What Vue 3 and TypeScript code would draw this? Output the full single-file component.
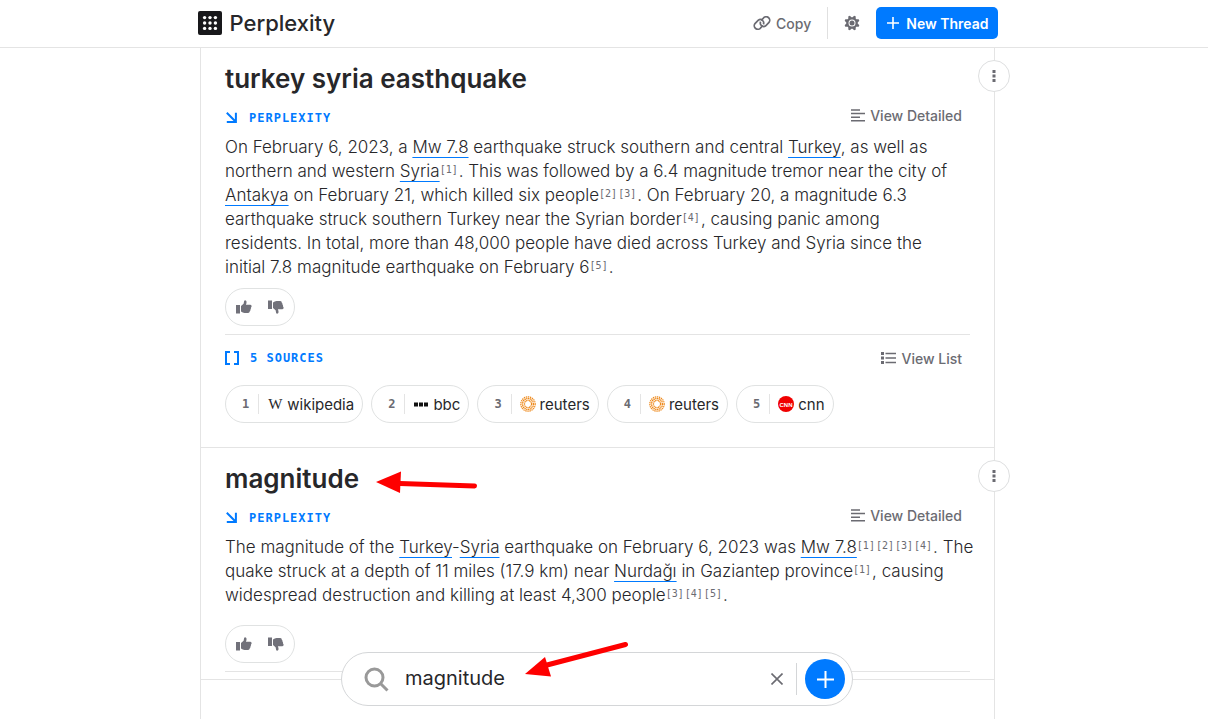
<script setup lang="ts">
import { ref } from 'vue'

type Token = { kind: 'text' | 'link' | 'cite'; value: string }
type Source = { id: number; name: string; icon: 'wikipedia' | 'bbc' | 'reuters' | 'cnn' }
type Thread = { title: string; lines: Token[][]; sources: Source[]; marked?: boolean }

const t = (value: string): Token => ({ kind: 'text', value })
const a = (value: string): Token => ({ kind: 'link', value })
const c = (value: number): Token => ({ kind: 'cite', value: `[${value}]` })

const threads: Thread[] = [
  {
    title: 'turkey syria easthquake',
    lines: [
      [t('On February 6, 2023, a '), a('Mw 7.8'), t(' earthquake struck southern and central '), a('Turkey'), t(', as well as')],
      [t('northern and western '), a('Syria'), c(1), t('. This was followed by a 6.4 magnitude tremor near the city of')],
      [a('Antakya'), t(' on February 21, which killed six people'), c(2), c(3), t('. On February 20, a magnitude 6.3')],
      [t('earthquake struck southern Turkey near the Syrian border'), c(4), t(', causing panic among')],
      [t('residents. In total, more than 48,000 people have died across Turkey and Syria since the')],
      [t('initial 7.8 magnitude earthquake on February 6'), c(5), t('.')],
    ],
    sources: [
      { id: 1, name: 'wikipedia', icon: 'wikipedia' },
      { id: 2, name: 'bbc', icon: 'bbc' },
      { id: 3, name: 'reuters', icon: 'reuters' },
      { id: 4, name: 'reuters', icon: 'reuters' },
      { id: 5, name: 'cnn', icon: 'cnn' },
    ],
  },
  {
    title: 'magnitude',
    marked: true,
    lines: [
      [t('The magnitude of the '), a('Turkey'), t('-'), a('Syria'), t(' earthquake on February 6, 2023 was '), a('Mw 7.8'), c(1), c(2), c(3), c(4), t('. The')],
      [t('quake struck at a depth of 11 miles (17.9 km) near '), a('Nurdağı'), t(' in Gaziantep province'), c(1), t(', causing')],
      [t('widespread destruction and killing at least 4,300 people'), c(3), c(4), c(5), t('.')],
    ],
    sources: [],
  },
]

const query = ref('magnitude')
const teeth = [0, 45, 90, 135, 180, 225, 270, 315]
const grid = [0, 1, 2, 3, 4, 5, 6, 7, 8]
const rings = [
  { r: 7.2, w: 1.2, dash: '1.4 0.7' },
  { r: 5.5, w: 1.4, dash: '1.3 0.5' },
  { r: 3.6, w: 1.3, dash: '1.2 0.4' },
]
</script>

<template>
  <div class="page">
    <header class="topbar">
      <div class="topbar-inner">
        <a class="brand" href="#">
          <svg width="24" height="24" viewBox="0 0 24 24" aria-hidden="true">
            <rect width="24" height="24" rx="2" fill="#18181b" />
            <circle v-for="n in grid" :key="n" :cx="6.6 + (n % 3) * 5.4" :cy="6.6 + Math.floor(n / 3) * 5.4" r="1.7" fill="#fff" />
          </svg>
          <span>Perplexity</span>
        </a>
        <nav class="actions">
          <button type="button" class="quiet copy">
            <svg width="18" height="14" viewBox="0 0 18 14" fill="none" stroke="currentColor" stroke-width="1.7" aria-hidden="true">
              <path d="M9.9 9.6 7.6 11.9 A3.4 3.4 0 0 1 2 7.6 L5.3 4.2 A3.4 3.4 0 0 1 10.4 8.3" />
              <path d="M8.1 4.4 10.4 2.1 A3.4 3.4 0 0 1 16 6.4 L12.7 9.8 A3.4 3.4 0 0 1 7.6 5.7" />
            </svg>
            Copy
          </button>
          <button type="button" class="quiet gear" aria-label="Settings">
            <svg width="16" height="16" viewBox="-8 -8 16 16" aria-hidden="true">
              <path v-for="d in teeth" :key="d" d="M-2.2 -4.5 L-0.8 -7.6 H0.8 L2.2 -4.5 Z" fill="currentColor" :transform="`rotate(${d + 22.5})`" />
              <circle r="4.5" fill="none" stroke="currentColor" stroke-width="2" />
              <circle r="2.5" fill="currentColor" />
            </svg>
          </button>
          <button type="button" class="new-thread">
            <svg width="12" height="12" viewBox="0 0 12 12" stroke="currentColor" stroke-width="1.6" aria-hidden="true">
              <path d="M6 0V12M0 6H12" />
            </svg>
            New Thread
          </button>
        </nav>
      </div>
    </header>

    <main class="column">
      <section v-for="thread in threads" :key="thread.title" class="thread">
        <h2>{{ thread.title }}</h2>
        <button type="button" class="more" aria-label="More options">
          <svg width="4" height="12" viewBox="0 0 4 12" fill="currentColor" aria-hidden="true">
            <path d="M.5 0h3v3h-3zM.5 4.5h3v3h-3zM.5 9h3v3h-3z" />
          </svg>
        </button>
        <svg v-if="thread.marked" class="mark title-mark" width="104" height="26" viewBox="0 0 104 26" aria-hidden="true">
          <path d="M24 13.500 L98.500 16" stroke="#fe0000" stroke-width="5" stroke-linecap="round" />
          <path d="M0 12 L25 1.500 L24 23 Z" fill="#fe0000" />
        </svg>

        <div class="row answer-row">
          <span class="label">
            <svg width="11" height="11" viewBox="0 0 11 11" fill="none" stroke="currentColor" stroke-width="2" aria-hidden="true">
              <path d="M.8 .8 9 9M9.900 .8V9.900H.8" />
            </svg>
            PERPLEXITY
          </span>
          <button type="button" class="quiet">
            <svg width="14" height="13" viewBox="0 0 14 13" stroke="currentColor" stroke-width="1.5" aria-hidden="true">
              <path d="M0 1H9M0 4.600H14M0 8.200H9M0 11.800H14" />
            </svg>
            View Detailed
          </button>
        </div>

        <p class="answer">
          <span v-for="(line, i) in thread.lines" :key="i" class="line">
            <template v-for="(token, j) in line" :key="j"><a v-if="token.kind === 'link'" href="#">{{ token.value }}</a><sup v-else-if="token.kind === 'cite'">{{ token.value }}</sup><template v-else>{{ token.value }}</template></template>
          </span>
        </p>

        <div class="feedback">
          <button type="button" aria-label="Helpful">
            <svg width="16" height="14" viewBox="0 0 16 14" fill="currentColor" aria-hidden="true">
              <path d="M0 5h4v8.500H0zM5 6 7.600 3.800 8.200.8Q9.200-.2 10.300 1q.6 1.400-.4 3.800h4.500q1.300.3 1.200 1.400 0 .8-.7 1.200.5 1-.4 1.900.3 1.100-.6 1.800 0 1.700-1.700 1.800H8.500Q6.800 12.800 5 11.400z" />
            </svg>
          </button>
          <button type="button" aria-label="Not helpful">
            <svg width="16" height="14" viewBox="0 0 16 14" fill="currentColor" aria-hidden="true">
              <path transform="translate(0 14) scale(1 -1)" d="M0 5h4v8.500H0zM5 6 7.600 3.800 8.200.8Q9.200-.2 10.300 1q.6 1.400-.4 3.800h4.500q1.300.3 1.200 1.400 0 .8-.7 1.200.5 1-.4 1.900.3 1.100-.6 1.800 0 1.700-1.700 1.800H8.500Q6.800 12.800 5 11.400z" />
            </svg>
          </button>
        </div>

        <hr />

        <template v-if="thread.sources.length">
          <div class="row sources-row">
            <span class="label">
              <svg width="14" height="14" viewBox="0 0 14 14" fill="none" stroke="currentColor" stroke-width="2" aria-hidden="true">
                <path d="M5 1H1V13H5M9 1H13V13H9" />
              </svg>
              {{ thread.sources.length }} SOURCES
            </span>
            <button type="button" class="quiet">
              <svg width="15" height="12" viewBox="0 0 15 12" stroke="currentColor" aria-hidden="true">
                <path d="M0 1.500H3M0 6H3M0 10.500H3" stroke-width="2.800" />
                <path d="M4.500 1.500H15M4.500 6H15M4.500 10.500H15" stroke-width="1.400" />
              </svg>
              View List
            </button>
          </div>
          <div class="chips">
            <a v-for="source in thread.sources" :key="source.id" class="chip" href="#">
              <span class="num">{{ source.id }}</span>
              <span v-if="source.icon === 'wikipedia'" class="wiki" aria-hidden="true">W</span>
              <svg v-else-if="source.icon === 'bbc'" width="16" height="16" viewBox="0 0 16 16" aria-hidden="true">
                <path d="M1 6.500h4v4H1zM6 6.500h4v4H6zM11 6.500h4v4H11z" fill="#111" />
              </svg>
              <svg v-else-if="source.icon === 'reuters'" width="16" height="16" viewBox="-8 -8 16 16" aria-hidden="true">
                <circle v-for="ring in rings" :key="ring.r" :r="ring.r" fill="none" stroke="#ee8a1d" :stroke-width="ring.w" :stroke-dasharray="ring.dash" />
              </svg>
              <svg v-else width="16" height="16" viewBox="0 0 16 16" aria-hidden="true">
                <circle cx="8" cy="8" r="8" fill="#f00000" />
                <text x="8" y="10.500" class="cnn">CNN</text>
              </svg>
              <span>{{ source.name }}</span>
            </a>
          </div>
        </template>
      </section>
    </main>

    <div class="dock">
      <form class="search" @submit.prevent>
        <svg width="25" height="25" viewBox="0 0 25 25" fill="none" stroke="#999" stroke-width="3" aria-hidden="true">
          <circle cx="10.500" cy="10.500" r="8.500" />
          <path d="M16.500 16.500 23.500 23.500" />
        </svg>
        <input v-model="query" type="text" aria-label="Ask a follow-up" />
        <button type="button" class="clear" aria-label="Clear" @click="query = ''">
          <svg width="12" height="12" viewBox="0 0 12 12" stroke="currentColor" stroke-width="1.600" aria-hidden="true">
            <path d="M.5 .5 11.500 11.500M11.500 .5 .5 11.500" />
          </svg>
        </button>
        <button type="submit" class="add" aria-label="Submit">
          <svg width="17" height="17" viewBox="0 0 17 17" stroke="currentColor" stroke-width="2" aria-hidden="true">
            <path d="M8.500 0V17M0 8.500H17" />
          </svg>
        </button>
        <svg class="mark search-mark" width="106" height="38" viewBox="0 0 106 38" aria-hidden="true">
          <path d="M22 24 L100.500 3.500" stroke="#fe0000" stroke-width="5" stroke-linecap="round" />
          <path d="M0 33 L20 16 L26 35.500 Z" fill="#fe0000" />
        </svg>
      </form>
    </div>
  </div>
</template>

<style>
body {
  margin: 0;
  background: #fff;
}
</style>

<style scoped>
.page {
  display: flex;
  flex-direction: column;
  height: 100vh;
  overflow: hidden;
  box-sizing: border-box;
  font-family: Inter, "Liberation Sans", sans-serif;
  color: #27272a;
}
button {
  border: 0;
  background: none;
  padding: 0;
  margin: 0;
  font: inherit;
  color: inherit;
  display: flex;
  align-items: center;
  justify-content: center;
  cursor: pointer;
}
svg {
  display: block;
  flex: none;
}
.topbar {
  border-bottom: 1px solid #e4e4e4;
  padding: 0 13px 1px 0;
}
.topbar-inner {
  max-width: 800px;
  height: 46px;
  margin: 0 auto;
  display: flex;
  align-items: center;
  justify-content: space-between;
}
.brand {
  display: flex;
  align-items: center;
  gap: 8px;
  color: #27272a;
  text-decoration: none;
  font-size: 22px;
  font-weight: 500;
}
.actions {
  display: flex;
  align-items: center;
  height: 32px;
}
.quiet {
  gap: 5px;
  color: #6b6b72;
  font-size: 14px;
  font-weight: 500;
}
.copy {
  height: 32px;
  padding-right: 16px;
  border-right: 1px solid #e0e0e0;
}
.gear {
  width: 48px;
}
.new-thread {
  height: 32px;
  padding: 0 9px 0 11px;
  gap: 7px;
  border-radius: 5px;
  background: #007aff;
  color: #fff;
  font-size: 14px;
  font-weight: 600;
}
.column {
  width: calc(100% - 13px);
  max-width: 795px;
  box-sizing: border-box;
  margin: 0 13px 0 0;
  align-self: center;
  flex: 1;
  border: solid #e4e4e4;
  border-width: 0 1px;
}
.thread {
  position: relative;
  padding: 15px 24px 0;
  border-bottom: 1px solid #e4e4e4;
}
.thread:first-child {
  padding-bottom: 24px;
}
.thread:last-child {
  padding-bottom: 7px;
}
h2 {
  margin: 0;
  font-size: 26px;
  line-height: 32px;
  font-weight: 600;
}
.more {
  position: absolute;
  top: 12px;
  right: -16px;
  width: 32px;
  height: 32px;
  border: 1px solid #dedfe0;
  border-radius: 50%;
  background: #fff;
  color: #6b6b72;
}
.mark {
  position: absolute;
  pointer-events: none;
}
.title-mark {
  left: 175px;
  top: 22px;
}
.search-mark {
  left: 183px;
  top: -12px;
}
.row {
  display: flex;
  align-items: center;
  justify-content: space-between;
  padding-right: 8px;
}
.answer-row {
  height: 40px;
}
.sources-row {
  height: 46px;
}
.label {
  display: flex;
  align-items: center;
  gap: 11px;
  color: #007aff;
  font-family: "DejaVu Sans Mono", monospace;
  font-size: 12px;
  font-weight: 700;
  letter-spacing: 1px;
}
.answer-row .label {
  gap: 12px;
  padding: 5px 0 0 1px;
}
.answer {
  margin: 0 -12px 0 0;
  min-height: 81px;
  font-size: 17px;
  font-weight: 300;
  line-height: 24px;
}
.thread:first-child .answer {
  min-height: 144px;
}
.line {
  display: block;
}
.answer a {
  color: inherit;
  text-decoration: underline;
  text-decoration-color: #007aff;
  text-decoration-thickness: 1px;
  text-underline-offset: 4px;
  text-decoration-skip-ink: none;
}
sup {
  margin: 0 1px 0 0;
  vertical-align: 4px;
  font-family: "DejaVu Sans Mono", monospace;
  font-size: 10px;
  font-weight: 400;
  line-height: 10px;
  color: #6b6b72;
}
.feedback {
  display: flex;
  align-items: center;
  justify-content: center;
  gap: 16px;
  width: 70px;
  height: 38px;
  box-sizing: border-box;
  margin-top: 9px;
  border: 1px solid #e0e2e2;
  border-radius: 19px;
  color: #71717a;
}
hr {
  height: 1px;
  margin: 8px 0 0;
  border: 0;
  background: #e4e4e4;
}
.chips {
  display: flex;
  flex-wrap: wrap;
  gap: 8px;
  margin-top: 4px;
}
.chip {
  display: flex;
  align-items: center;
  gap: 4px;
  height: 38px;
  box-sizing: border-box;
  padding: 0 8px 0 16px;
  border: 1px solid #e0e2e2;
  border-radius: 19px;
  color: #27272a;
  font-size: 15px;
  text-decoration: none;
}
.num {
  height: 20px;
  line-height: 20px;
  padding-right: 9px;
  margin-right: 4px;
  border-right: 1px solid #e4e4e4;
  color: #6b6b72;
  font-family: "DejaVu Sans Mono", monospace;
  font-size: 12px;
  font-weight: 700;
}
.wiki {
  width: 16px;
  font-family: "Liberation Serif", serif;
  font-size: 15px;
  text-align: center;
}
.cnn {
  fill: #fff;
  font-family: "Liberation Sans", sans-serif;
  font-size: 6px;
  font-weight: 700;
  text-anchor: middle;
}
.dock {
  position: fixed;
  left: 0;
  right: 14px;
  bottom: 13px;
  display: flex;
  justify-content: center;
}
.search {
  position: relative;
  display: flex;
  align-items: center;
  width: 512px;
  max-width: 100%;
  height: 54px;
  box-sizing: border-box;
  padding: 0 7px 0 22px;
  border: 1px solid #d4d6d8;
  border-radius: 27px;
  background: #fff;
}
.search input {
  flex: 1;
  min-width: 0;
  margin-left: 16px;
  padding: 0 0 2px;
  border: 0;
  outline: 0;
  background: none;
  color: #27272a;
  font: inherit;
  font-size: 20px;
}
.clear {
  width: 40px;
  height: 32px;
  border-right: 1px solid #d4d6d8;
  color: #6b6b72;
}
.add {
  width: 40px;
  height: 40px;
  margin-left: 8px;
  border-radius: 50%;
  background: #007aff;
  color: #fff;
}
</style>
